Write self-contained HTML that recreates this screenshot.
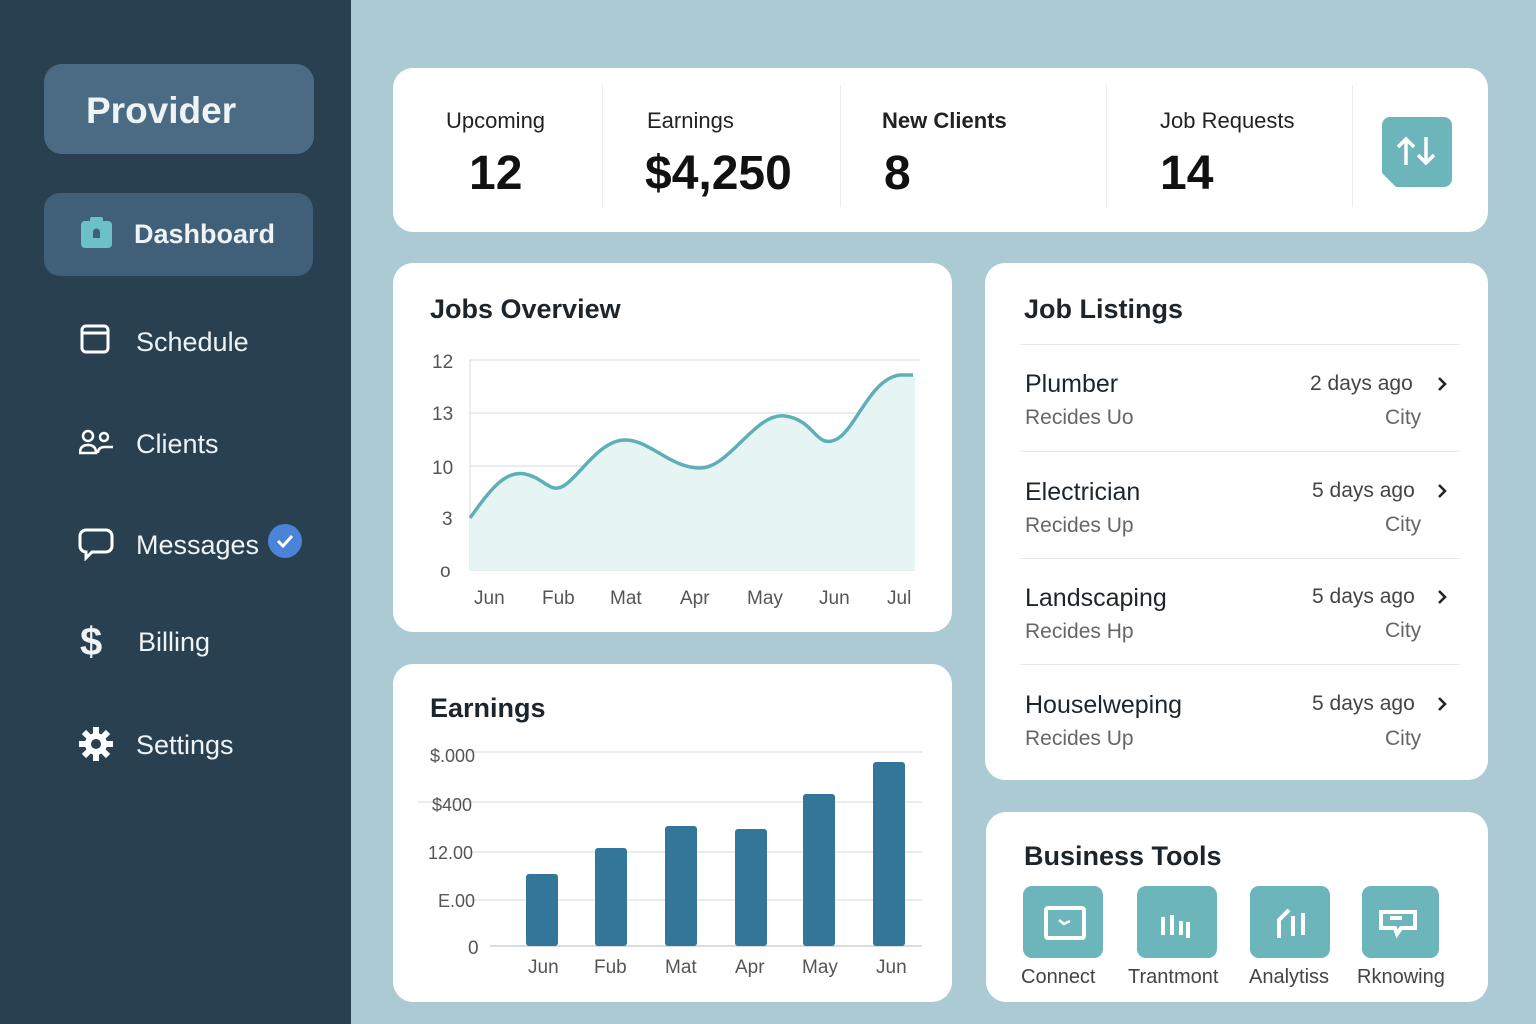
<!DOCTYPE html>
<html><head><style>
*{margin:0;padding:0;box-sizing:border-box}
body{width:1536px;height:1024px;background:#abcad4;font-family:"Liberation Sans",sans-serif;position:relative;overflow:hidden;color:#1e2a33}
.side{position:absolute;left:0;top:0;width:351px;height:1024px;background:#28404f}
.prov{position:absolute;left:44px;top:64px;width:270px;height:90px;background:#4a6b83;border-radius:18px;color:#eef3f6;font-size:37px;font-weight:bold;padding:26px 0 0 42px}
.dash{position:absolute;left:44px;top:193px;width:269px;height:83px;background:#3f6078;border-radius:16px}
.nav{position:absolute;color:#eef3f6;font-size:27px}
.card{position:absolute;background:#fff;border-radius:20px}
.lbl{position:absolute;font-size:22px;color:#222}
.big{position:absolute;font-size:48px;font-weight:bold;color:#111}
.sep{position:absolute;top:85px;width:1px;height:122px;background:#e8ecee}
h2{position:absolute;font-size:27px;font-weight:bold;color:#1c252c}
.ax{position:absolute;font-size:19px;color:#555}
.jt{position:absolute;font-size:25px;color:#1c252c}
.js{position:absolute;font-size:21px;color:#666}
.hr{position:absolute;left:1020px;width:440px;height:1px;background:#e6e9eb}
.tool{position:absolute;top:886px;width:80px;height:72px;background:#6cb5bb;border-radius:9px}
.tl{position:absolute;top:966px;font-size:20px;color:#444}
</style></head><body>
<div class="side"></div>
<div class="prov">Provider</div>
<div class="dash"></div>
<svg style="position:absolute;left:80px;top:216px" width="34" height="34"><rect x="1" y="5" width="31" height="27" rx="4" fill="#6cc0c8"/><rect x="10" y="1" width="13" height="8" rx="2" fill="#6cc0c8"/><path d="M13 22v-6a3.5 3.5 0 017 0v6z" fill="#3f6078"/></svg>
<div class="nav" style="left:134px;top:219px;font-weight:bold">Dashboard</div>
<svg style="position:absolute;left:80px;top:324px" width="30" height="30"><rect x="2" y="2" width="26" height="26" rx="4" fill="none" stroke="#fff" stroke-width="3"/><line x1="2" y1="9" x2="28" y2="9" stroke="#fff" stroke-width="3"/></svg>
<div class="nav" style="left:136px;top:327px">Schedule</div>
<svg style="position:absolute;left:79px;top:428px" width="36" height="28"><circle cx="9" cy="8" r="5" fill="none" stroke="#fff" stroke-width="2.5"/><circle cx="25" cy="9" r="4" fill="none" stroke="#fff" stroke-width="2.5"/><path d="M1 25q0-8 8-8t8 8zM19 25q0-6 7-6h8" fill="none" stroke="#fff" stroke-width="2.5"/></svg>
<div class="nav" style="left:136px;top:429px">Clients</div>
<svg style="position:absolute;left:78px;top:527px" width="36" height="34"><path d="M8 3h20a6 6 0 016 6v10a6 6 0 01-6 6H14l-6 6v-6a6 6 0 01-6-6V9a6 6 0 016-6z" fill="none" stroke="#fff" stroke-width="3"/></svg>
<div class="nav" style="left:136px;top:530px">Messages</div>
<svg style="position:absolute;left:267px;top:523px" width="36" height="36"><circle cx="18" cy="18" r="17" fill="#4a84d6"/><path d="M11 18l5 5 9-10" fill="none" stroke="#fff" stroke-width="3"/></svg>
<div class="nav" style="left:80px;top:620px;font-size:40px;font-weight:bold">$</div>
<div class="nav" style="left:138px;top:627px">Billing</div>
<svg style="position:absolute;left:79px;top:727px" width="34" height="34"><g fill="#fff" transform="translate(17 17)"><circle r="11"/><g id="t"><rect x="-3" y="-17" width="6" height="8"/></g><use href="#t" transform="rotate(45)"/><use href="#t" transform="rotate(90)"/><use href="#t" transform="rotate(135)"/><use href="#t" transform="rotate(180)"/><use href="#t" transform="rotate(225)"/><use href="#t" transform="rotate(270)"/><use href="#t" transform="rotate(315)"/><circle r="5" fill="#28404f"/></g></svg>
<div class="nav" style="left:136px;top:730px">Settings</div>

<div class="card" style="left:393px;top:68px;width:1095px;height:164px"></div>
<div class="lbl" style="left:446px;top:108px">Upcoming</div><div class="big" style="left:469px;top:146px">12</div>
<div class="sep" style="left:602px"></div>
<div class="lbl" style="left:647px;top:108px">Earnings</div><div class="big" style="left:645px;top:146px">$4,250</div>
<div class="sep" style="left:840px"></div>
<div class="lbl" style="left:882px;top:108px;font-weight:bold">New Clients</div><div class="big" style="left:884px;top:146px">8</div>
<div class="sep" style="left:1106px"></div>
<div class="lbl" style="left:1160px;top:108px">Job Requests</div><div class="big" style="left:1160px;top:146px">14</div>
<div class="sep" style="left:1352px"></div>
<svg style="position:absolute;left:1382px;top:117px" width="70" height="70"><path d="M8 0h54a8 8 0 018 8v54a8 8 0 01-8 8H14L0 56V8a8 8 0 018-8z" fill="#6cb5bb"/><path d="M24 48V22M16 30l8-8 8 8M44 20v26M36 38l8 8 8-8" fill="none" stroke="#fff" stroke-width="3.5"/></svg>

<div class="card" style="left:393px;top:263px;width:559px;height:369px"></div>
<h2 style="left:430px;top:294px">Jobs Overview</h2>
<svg style="position:absolute;left:0;top:0" width="960" height="640">
<g stroke="#e3e7e9" stroke-width="1.5"><line x1="470" y1="360" x2="920" y2="360"/><line x1="470" y1="413" x2="915" y2="413"/><line x1="470" y1="466" x2="915" y2="466"/><line x1="470" y1="518" x2="915" y2="518"/><line x1="470" y1="570" x2="915" y2="570"/><line x1="470" y1="360" x2="470" y2="570"/></g>
<path d="M470 518C490 490 505 470 525 474S550 495 565 485S600 440 625 440S670 468 700 468S755 412 785 416S815 448 835 440S870 378 900 375L915 375V570H470Z" fill="#e6f4f3"/>
<path d="M470 518C490 490 505 470 525 474S550 495 565 485S600 440 625 440S670 468 700 468S755 412 785 416S815 448 835 440S870 378 900 375L913 375" fill="none" stroke="#5fb0b6" stroke-width="3.5"/>
</svg>
<div class="ax" style="left:432px;top:352px">12</div><div class="ax" style="left:432px;top:404px">13</div><div class="ax" style="left:432px;top:458px">10</div><div class="ax" style="left:442px;top:509px">3</div><div class="ax" style="left:440px;top:561px">o</div>
<div class="ax" style="left:474px;top:588px">Jun</div><div class="ax" style="left:542px;top:588px">Fub</div><div class="ax" style="left:610px;top:588px">Mat</div><div class="ax" style="left:680px;top:588px">Apr</div><div class="ax" style="left:747px;top:588px">May</div><div class="ax" style="left:819px;top:588px">Jun</div><div class="ax" style="left:887px;top:588px">Jul</div>

<div class="card" style="left:393px;top:664px;width:559px;height:338px"></div>
<h2 style="left:430px;top:693px">Earnings</h2>
<svg style="position:absolute;left:0;top:0" width="960" height="1000">
<g stroke="#e3e7e9" stroke-width="1.5"><line x1="470" y1="752" x2="922" y2="752"/><line x1="418" y1="802" x2="922" y2="802"/><line x1="470" y1="852" x2="922" y2="852"/><line x1="470" y1="900" x2="922" y2="900"/><line x1="490" y1="946" x2="922" y2="946" stroke="#ccd2d5"/></g>
<g fill="#33769a"><rect x="526" y="874" width="32" height="72" rx="3"/><rect x="595" y="848" width="32" height="98" rx="3"/><rect x="665" y="826" width="32" height="120" rx="3"/><rect x="735" y="829" width="32" height="117" rx="3"/><rect x="803" y="794" width="32" height="152" rx="3"/><rect x="873" y="762" width="32" height="184" rx="3"/></g>
</svg>
<div class="ax" style="left:430px;top:746px;font-size:18px">$.000</div><div class="ax" style="left:432px;top:795px;font-size:18px">$400</div><div class="ax" style="left:428px;top:843px;font-size:18px">12.00</div><div class="ax" style="left:438px;top:891px;font-size:18px">E.00</div><div class="ax" style="left:468px;top:938px">0</div>
<div class="ax" style="left:528px;top:957px">Jun</div><div class="ax" style="left:594px;top:957px">Fub</div><div class="ax" style="left:665px;top:957px">Mat</div><div class="ax" style="left:735px;top:957px">Apr</div><div class="ax" style="left:802px;top:957px">May</div><div class="ax" style="left:876px;top:957px">Jun</div>

<div class="card" style="left:985px;top:263px;width:503px;height:517px"></div>
<h2 style="left:1024px;top:294px">Job Listings</h2>
<div class="hr" style="top:344px"></div><div class="hr" style="top:451px"></div><div class="hr" style="top:558px"></div><div class="hr" style="top:664px"></div>
<div class="jt" style="left:1025px;top:370px">Plumber</div><div class="js" style="left:1025px;top:406px">Recides Uo</div><div class="js" style="left:1310px;top:372px;color:#444">2 days ago</div><div class="js" style="left:1385px;top:406px">City</div>
<div class="jt" style="left:1025px;top:478px">Electrician</div><div class="js" style="left:1025px;top:514px">Recides Up</div><div class="js" style="left:1312px;top:479px;color:#444">5 days ago</div><div class="js" style="left:1385px;top:513px">City</div>
<div class="jt" style="left:1025px;top:584px">Landscaping</div><div class="js" style="left:1025px;top:620px">Recides Hp</div><div class="js" style="left:1312px;top:585px;color:#444">5 days ago</div><div class="js" style="left:1385px;top:619px">City</div>
<div class="jt" style="left:1025px;top:691px">Houselweping</div><div class="js" style="left:1025px;top:727px">Recides Up</div><div class="js" style="left:1312px;top:692px;color:#444">5 days ago</div><div class="js" style="left:1385px;top:727px">City</div>
<svg style="position:absolute;left:1436px;top:376px" width="14" height="340"><g fill="none" stroke="#222" stroke-width="2.5"><path d="M3 2l6 6-6 6"/><path d="M3 109l6 6-6 6"/><path d="M3 215l6 6-6 6"/><path d="M3 322l6 6-6 6"/></g></svg>

<div class="card" style="left:986px;top:812px;width:502px;height:190px"></div>
<h2 style="left:1024px;top:841px">Business Tools</h2>
<div class="tool" style="left:1023px"></div><div class="tool" style="left:1137px"></div><div class="tool" style="left:1250px"></div><div class="tool" style="left:1362px;width:77px"></div>
<svg style="position:absolute;left:0;top:0;pointer-events:none" width="1536" height="1000"><g fill="none" stroke="#fff" stroke-width="4"><rect x="1046" y="908" width="38" height="30" rx="2"/><path d="M1059 920l5 4 6-3" stroke-width="2.5"/><path d="M1163 935v-18M1172 935v-20M1181 935v-14M1188 938v-16"/><path d="M1279 938v-18l10-10M1293 936v-20M1303 935v-22"/><path d="M1381 912h34v16h-14l-4 6-2-6h-14zM1390 918h12"/></g></svg>
<div class="tl" style="left:1021px">Connect</div><div class="tl" style="left:1128px">Trantmont</div><div class="tl" style="left:1249px">Analytiss</div><div class="tl" style="left:1357px">Rknowing</div>
</body></html>
